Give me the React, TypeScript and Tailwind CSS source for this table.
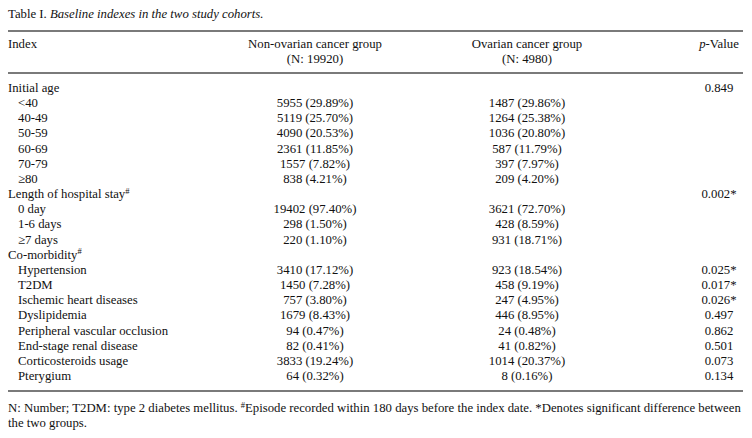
type Row = {
  label: string;
  sub?: boolean;
  sup?: boolean;
  a?: string;
  b?: string;
  p?: string;
};

const rows: Row[] = [
  { label: "Initial age", p: "0.849" },
  { label: "<40", sub: true, a: "5955 (29.89%)", b: "1487 (29.86%)" },
  { label: "40-49", sub: true, a: "5119 (25.70%)", b: "1264 (25.38%)" },
  { label: "50-59", sub: true, a: "4090 (20.53%)", b: "1036 (20.80%)" },
  { label: "60-69", sub: true, a: "2361 (11.85%)", b: "587 (11.79%)" },
  { label: "70-79", sub: true, a: "1557 (7.82%)", b: "397 (7.97%)" },
  { label: "≥80", sub: true, a: "838 (4.21%)", b: "209 (4.20%)" },
  { label: "Length of hospital stay", sup: true, p: "0.002*" },
  { label: "0 day", sub: true, a: "19402 (97.40%)", b: "3621 (72.70%)" },
  { label: "1-6 days", sub: true, a: "298 (1.50%)", b: "428 (8.59%)" },
  { label: "≥7 days", sub: true, a: "220 (1.10%)", b: "931 (18.71%)" },
  { label: "Co-morbidity", sup: true },
  { label: "Hypertension", sub: true, a: "3410 (17.12%)", b: "923 (18.54%)", p: "0.025*" },
  { label: "T2DM", sub: true, a: "1450 (7.28%)", b: "458 (9.19%)", p: "0.017*" },
  { label: "Ischemic heart diseases", sub: true, a: "757 (3.80%)", b: "247 (4.95%)", p: "0.026*" },
  { label: "Dyslipidemia", sub: true, a: "1679 (8.43%)", b: "446 (8.95%)", p: "0.497" },
  { label: "Peripheral vascular occlusion", sub: true, a: "94 (0.47%)", b: "24 (0.48%)", p: "0.862" },
  { label: "End-stage renal disease", sub: true, a: "82 (0.41%)", b: "41 (0.82%)", p: "0.501" },
  { label: "Corticosteroids usage", sub: true, a: "3833 (19.24%)", b: "1014 (20.37%)", p: "0.073" },
  { label: "Pterygium", sub: true, a: "64 (0.32%)", b: "8 (0.16%)", p: "0.134" },
];

const cols = "grid grid-cols-[207px_200px_224px_104px]";

export default function App() {
  return (
    <div className="w-[752px] h-[438px] bg-white px-2 pt-[7px] text-[12.75px] text-[#111] font-['Liberation_Serif',serif] overflow-hidden">
      <p className="leading-[15px]">
        Table I. <i>Baseline indexes in the two study cohorts.</i>
      </p>

      <div className="mt-[8px] w-[735px] h-[2px] bg-[#7a7a7a]" />
      <div className={`${cols} leading-[15px] pt-[5px] pb-[5px]`}>
        <div>Index</div>
        <div className="text-center">
          Non-ovarian cancer group
          <br />
          (N: 19920)
        </div>
        <div className="text-center">
          Ovarian cancer group
          <br />
          (N: 4980)
        </div>
        <div className="pl-[56px] text-center">
          <i>p</i>-Value
        </div>
      </div>
      <div className="w-[735px] h-[2px] bg-[#7a7a7a]" />

      <div className="pt-[7px] pb-[6px] leading-[15.16px]">
        {rows.map((r) => (
          <div key={r.label} className={cols}>
            <div className={r.sub ? "pl-[10px]" : ""}>
              {r.label}
              {r.sup && <sup className="text-[8.5px]">#</sup>}
            </div>
            <div className="text-center">{r.a}</div>
            <div className="text-center">{r.b}</div>
            <div className="pl-[56px] text-center whitespace-nowrap">{r.p}</div>
          </div>
        ))}
      </div>
      <div className="w-[735px] h-[2px] bg-[#7a7a7a]" />

      <p className="mt-[9px] leading-[15px] whitespace-nowrap">
        N: Number; T2DM: type 2 diabetes mellitus. <sup className="text-[8.5px]">#</sup>Episode recorded within 180 days
        before the index date. *Denotes significant difference between
        <br />
        the two groups.
      </p>
    </div>
  );
}
